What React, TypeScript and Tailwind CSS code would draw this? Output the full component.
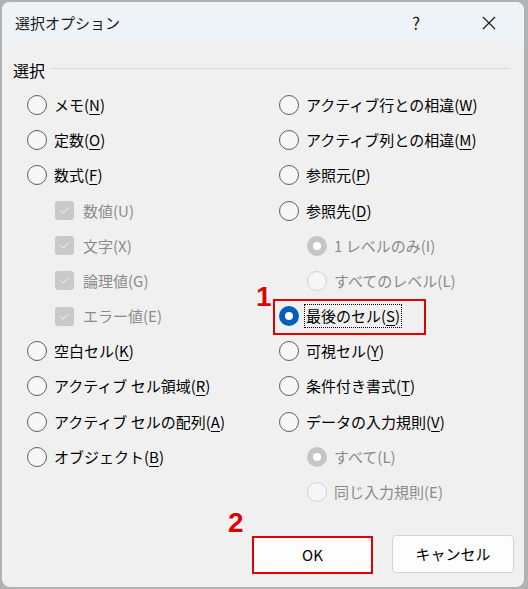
import React from 'react';

type Kind = 'radio' | 'radioOn' | 'disOn' | 'disOff' | 'check';

type Item = {
  kind: Kind;
  text: string;
  key?: string;
  sub?: boolean;
  focus?: boolean;
};

const leftItems: Item[] = [
  { kind: 'radio', text: 'メモ', key: 'N' },
  { kind: 'radio', text: '定数', key: 'O' },
  { kind: 'radio', text: '数式', key: 'F' },
  { kind: 'check', text: '数値(U)', sub: true },
  { kind: 'check', text: '文字(X)', sub: true },
  { kind: 'check', text: '論理値(G)', sub: true },
  { kind: 'check', text: 'エラー値(E)', sub: true },
  { kind: 'radio', text: '空白セル', key: 'K' },
  { kind: 'radio', text: 'アクティブ セル領域', key: 'R' },
  { kind: 'radio', text: 'アクティブ セルの配列', key: 'A' },
  { kind: 'radio', text: 'オブジェクト', key: 'B' },
];

const rightItems: Item[] = [
  { kind: 'radio', text: 'アクティブ行との相違', key: 'W' },
  { kind: 'radio', text: 'アクティブ列との相違', key: 'M' },
  { kind: 'radio', text: '参照元', key: 'P' },
  { kind: 'radio', text: '参照先', key: 'D' },
  { kind: 'disOn', text: '1 レベルのみ(I)', sub: true },
  { kind: 'disOff', text: 'すべてのレベル(L)', sub: true },
  { kind: 'radioOn', text: '最後のセル', key: 'S', focus: true },
  { kind: 'radio', text: '可視セル', key: 'Y' },
  { kind: 'radio', text: '条件付き書式', key: 'T' },
  { kind: 'radio', text: 'データの入力規則', key: 'V' },
  { kind: 'disOn', text: 'すべて(L)', sub: true },
  { kind: 'disOff', text: '同じ入力規則(E)', sub: true },
];

const Mark = ({ kind }: { kind: Kind }) => {
  if (kind === 'check') {
    return (
      <span className="flex h-[19px] w-[19px] shrink-0 items-center justify-center rounded-[3px] bg-[#c9c9c9]">
        <svg width="11" height="9" viewBox="0 0 11 9" fill="none">
          <path d="M1.5 4.5 L4.2 7.2 L9.5 1.8" stroke="#f4f4f4" strokeWidth="1" />
        </svg>
      </span>
    );
  }
  if (kind === 'radioOn') {
    return (
      <span className="flex h-[20px] w-[20px] shrink-0 items-center justify-center rounded-full bg-[#005fb8]">
        <span className="h-[8px] w-[8px] rounded-full bg-white" />
      </span>
    );
  }
  if (kind === 'disOn') {
    return (
      <span className="flex h-[20px] w-[20px] shrink-0 items-center justify-center rounded-full bg-[#c5c5c5]">
        <span className="h-[8px] w-[8px] rounded-full bg-white" />
      </span>
    );
  }
  if (kind === 'disOff') {
    return <span className="h-[20px] w-[20px] shrink-0 rounded-full border border-[#d2d2d2] bg-[#f6f6f6]" />;
  }
  return <span className="h-[20px] w-[20px] shrink-0 rounded-full border border-[#5e5e5e] bg-[#f7f7f7]" />;
};

const Row = ({ item }: { item: Item }) => {
  const disabled = item.kind === 'check' || item.kind === 'disOn' || item.kind === 'disOff';
  const label = item.key ? (
    <>
      {item.text}(<span className="underline underline-offset-[3px]">{item.key}</span>)
    </>
  ) : (
    item.text
  );
  return (
    <div className={`relative flex h-[35.2px] items-center ${item.sub ? 'pl-[28px]' : ''}`}>
      {item.focus && (
        <>
          <span className="absolute left-[-6px] top-[0px] h-[36px] w-[153px] border-2 border-[#e00000]" />
          <span className="absolute left-[-23px] top-[-16px] font-['Liberation_Sans',sans-serif] text-[28px] font-bold leading-none text-[#e00000] [text-shadow:0_0_2px_#fff,0_0_2px_#fff]">
            1
          </span>
        </>
      )}
      <Mark kind={item.kind} />
      <span
        className={`${item.kind === 'check' ? 'ml-[7px]' : 'ml-[5px]'} whitespace-nowrap px-[1px] text-[15px] leading-[22px] ${
          disabled ? 'text-[#8b8b8b]' : 'text-black'
        } ${item.focus ? 'border border-dotted border-black' : 'border border-transparent'}`}
      >
        {label}
      </span>
    </div>
  );
};

export default function App() {
  return (
    <div className="h-[589px] w-[528px] bg-[#b2b2b2] pl-[2px] pt-[2px] font-['Noto_Sans_CJK_JP',sans-serif]">
      <div className="flex h-[585px] w-[522px] flex-col overflow-hidden rounded-[8px] bg-[#f0f0f0]">
        {/* タイトルバー */}
        <div className="flex h-[42px] shrink-0 items-center bg-[#eef3f8] pl-[13px]">
          <span className="text-[15px] text-[#1a1a1a]">選択オプション</span>
          <span className="ml-auto mr-[62px] text-[17px] text-[#1a1a1a]">?</span>
          <svg className="mr-[28px]" width="14" height="14" viewBox="0 0 14 14">
            <path d="M1 1 L13 13 M13 1 L1 13" stroke="#1a1a1a" strokeWidth="1.2" />
          </svg>
        </div>

        {/* 選択 グループ */}
        <div className="mt-[16px] flex h-[20px] items-center pl-[11px] pr-[14px]">
          <span className="text-[16px] leading-[20px] text-black">選択</span>
          <span className="mb-[3px] ml-[6px] h-px flex-1 bg-[#d8d8d8]" />
        </div>

        <div className="mt-[7.4px] grid grid-cols-[252px_1fr] pl-[25px]">
          <div className="flex flex-col">
            {leftItems.map((it, i) => (
              <Row key={i} item={it} />
            ))}
          </div>
          <div className="flex flex-col">
            {rightItems.map((it, i) => (
              <Row key={i} item={it} />
            ))}
          </div>
        </div>

        {/* ボタン */}
        <div className="mt-auto flex justify-end gap-[19px] pb-[13px] pr-[10px]">
          <div className="relative">
            <span className="absolute left-[-24px] top-[-27px] font-['Liberation_Sans',sans-serif] text-[28px] font-bold leading-none text-[#e00000] [text-shadow:0_0_2px_#fff,0_0_2px_#fff]">
              2
            </span>
            <button className="flex h-[38px] w-[121px] items-center justify-center border-2 border-[#e00000] bg-[#fdfdfd] text-[15px] text-black">
              OK
            </button>
          </div>
          <button className="mt-[-1px] flex h-[38px] w-[122px] items-center justify-center rounded-[4px] border border-[#d3d3d3] bg-[#fdfdfd] text-[15px] text-black">
            キャンセル
          </button>
        </div>
      </div>
    </div>
  );
}
